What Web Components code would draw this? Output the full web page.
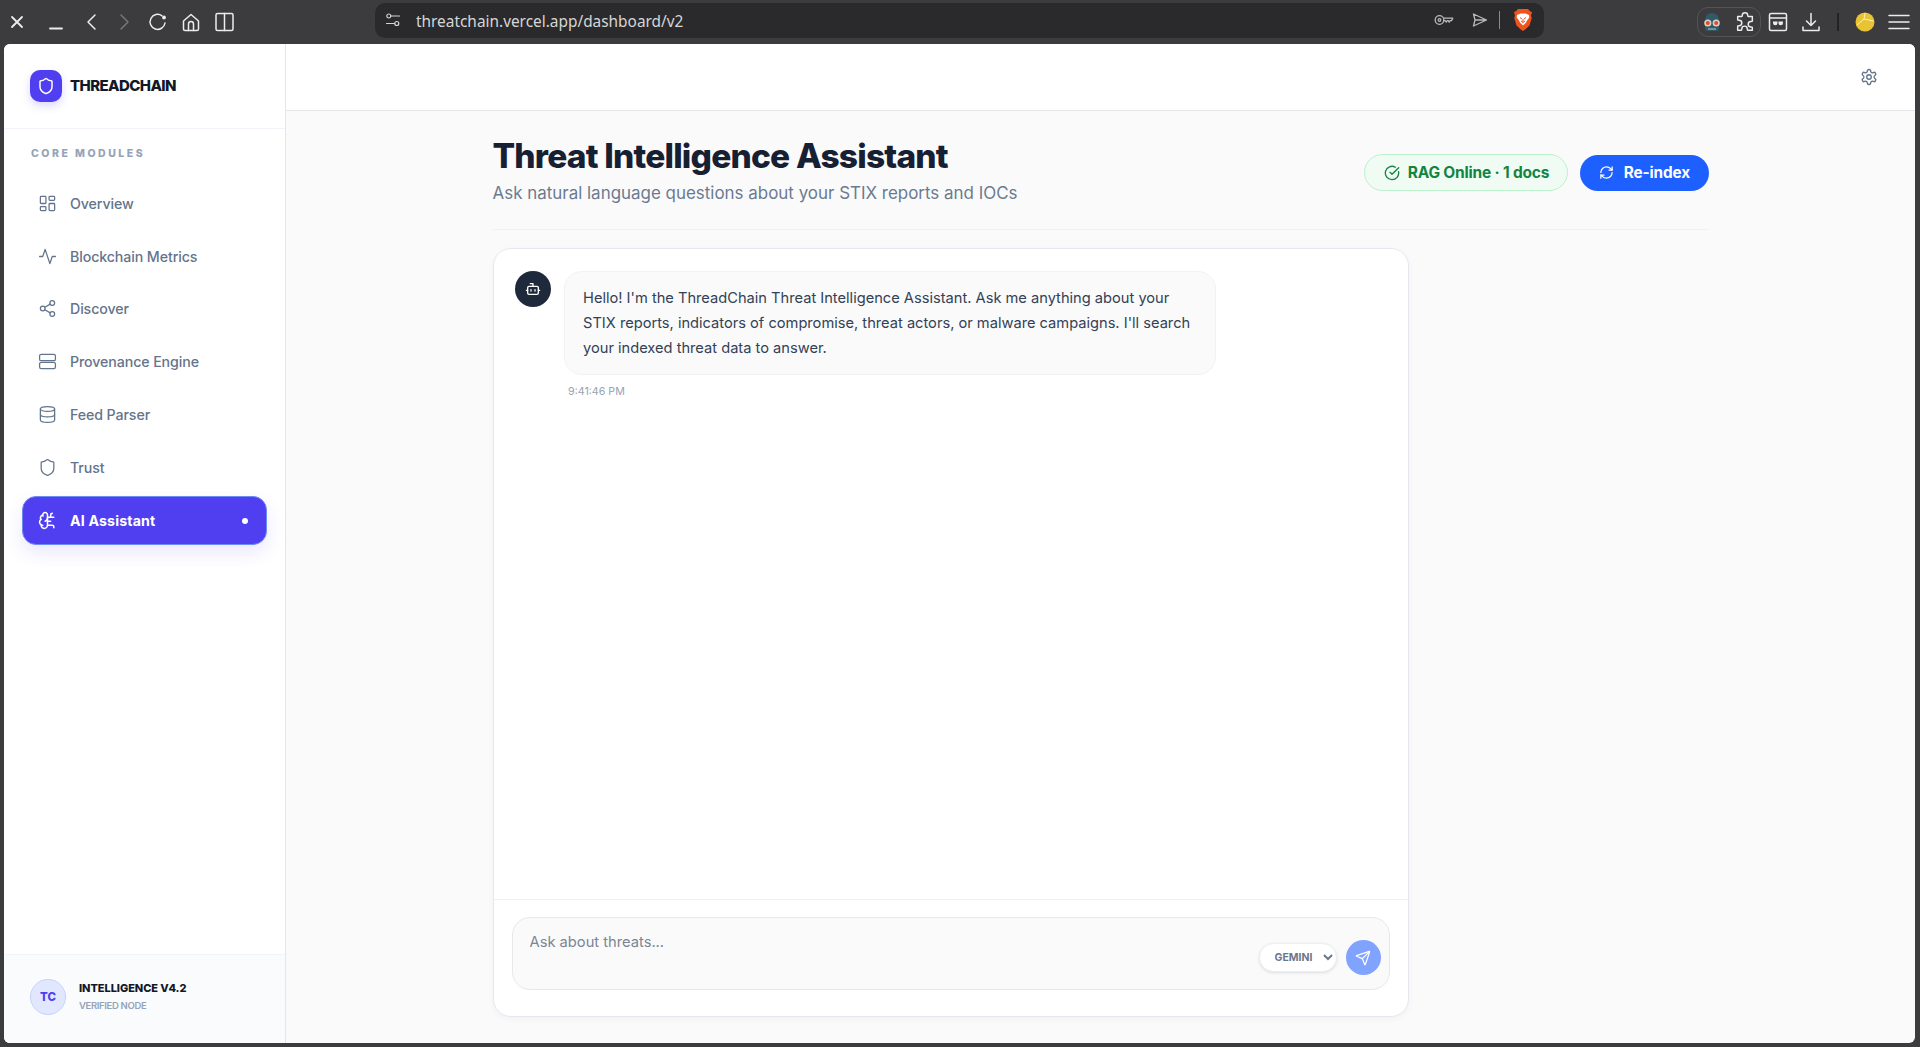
<!DOCTYPE html>
<html lang="en">
<head>
<meta charset="utf-8">
<title>ThreadChain</title>
<style>
  html, body { margin: 0; height: 100%; overflow: hidden; background: #3c3c3e; font-family: Inter, "Noto Sans", sans-serif; }
  body { display: flex; flex-direction: column; }
  browser-bar { flex: none; }
  app-shell { flex: 1; min-height: 0; }
</style>
</head>
<body>
<browser-bar url="threatchain.vercel.app/dashboard/v2"></browser-bar>
<app-shell>
  <app-sidebar slot="sidebar">
    <nav-item icon="dashboard">Overview</nav-item>
    <nav-item icon="activity">Blockchain Metrics</nav-item>
    <nav-item icon="share">Discover</nav-item>
    <nav-item icon="server">Provenance Engine</nav-item>
    <nav-item icon="database">Feed Parser</nav-item>
    <nav-item icon="shield">Trust</nav-item>
    <nav-item icon="brain" active>AI Assistant</nav-item>
  </app-sidebar>
  <page-head title="Threat Intelligence Assistant" subtitle="Ask natural language questions about your STIX reports and IOCs">
    <status-badge>RAG Online · 1 docs</status-badge>
    <action-button>Re-index</action-button>
  </page-head>
  <chat-panel>
    <chat-message time="9:41:46 PM">Hello! I'm the ThreadChain Threat Intelligence Assistant. Ask me anything about your STIX reports, indicators of compromise, threat actors, or malware campaigns. I'll search your indexed threat data to answer.</chat-message>
  </chat-panel>
</app-shell>

<script>
const ICONS = {
  dashboard: '<rect x="3" y="3" width="7" height="9" rx="1"/><rect x="14" y="3" width="7" height="5" rx="1"/><rect x="14" y="12" width="7" height="9" rx="1"/><rect x="3" y="16" width="7" height="5" rx="1"/>',
  activity: '<path d="M22 12h-4l-3 9L9 3l-3 9H2"/>',
  share: '<circle cx="18" cy="5" r="3"/><circle cx="6" cy="12" r="3"/><circle cx="18" cy="19" r="3"/><path d="M8.59 13.51l6.83 3.98M15.41 6.51l-6.82 3.98"/>',
  server: '<rect x="2" y="3" width="20" height="8" rx="2"/><rect x="2" y="13" width="20" height="8" rx="2"/>',
  database: '<ellipse cx="12" cy="5" rx="9" ry="3"/><path d="M3 5v14a9 3 0 0 0 18 0V5"/><path d="M3 12a9 3 0 0 0 18 0"/>',
  shield: '<path d="M20 13c0 5-3.5 7.5-7.66 8.95a1 1 0 0 1-.67-.01C7.5 20.5 4 18 4 13V6a1 1 0 0 1 1-1c2 0 4.5-1.2 6.24-2.72a1.17 1.17 0 0 1 1.52 0C14.51 3.81 17 5 19 5a1 1 0 0 1 1 1z"/>',
  brain: '<path d="M12 5a3 3 0 1 0-5.997.125 4 4 0 0 0-2.526 5.77 4 4 0 0 0 .556 6.588A4 4 0 1 0 12 18Z"/><path d="M9 13a4.5 4.5 0 0 0 3-4"/><path d="M6.003 5.125A3 3 0 0 0 6.401 6.5"/><path d="M3.477 10.896a4 4 0 0 1 .585-.396"/><path d="M6 18a4 4 0 0 1-1.967-.516"/><path d="M12 13h4"/><path d="M12 18h6a2 2 0 0 1 2 2v1"/><path d="M12 8h8"/><path d="M16 8V5a2 2 0 0 1 2-2"/>',
  gear: '<path d="M12.22 2h-.44a2 2 0 0 0-2 2v.18a2 2 0 0 1-1 1.73l-.43.25a2 2 0 0 1-2 0l-.15-.08a2 2 0 0 0-2.73.73l-.22.38a2 2 0 0 0 .73 2.73l.15.1a2 2 0 0 1 1 1.72v.51a2 2 0 0 1-1 1.74l-.15.09a2 2 0 0 0-.73 2.73l.22.38a2 2 0 0 0 2.73.73l.15-.08a2 2 0 0 1 2 0l.43.25a2 2 0 0 1 1 1.73V20a2 2 0 0 0 2 2h.44a2 2 0 0 0 2-2v-.18a2 2 0 0 1 1-1.73l.43-.25a2 2 0 0 1 2 0l.15.08a2 2 0 0 0 2.73-.73l.22-.39a2 2 0 0 0-.73-2.73l-.15-.08a2 2 0 0 1-1-1.74v-.5a2 2 0 0 1 1-1.74l.15-.09a2 2 0 0 0 .73-2.73l-.22-.38a2 2 0 0 0-2.73-.73l-.15.08a2 2 0 0 1-2 0l-.43-.25a2 2 0 0 1-1-1.73V4a2 2 0 0 0-2-2z"/><circle cx="12" cy="12" r="3"/>',
  check: '<path d="M21.801 10A10 10 0 1 1 17 3.335"/><path d="m9 11 3 3L22 4"/>',
  refresh: '<path d="M3 12a9 9 0 0 1 9-9 9.75 9.75 0 0 1 6.74 2.74L21 8"/><path d="M21 3v5h-5"/><path d="M21 12a9 9 0 0 1-9 9 9.75 9.75 0 0 1-6.74-2.74L3 16"/><path d="M8 16H3v5"/>',
  bot: '<path d="M12 8V4H8"/><rect x="4" y="8" width="16" height="12" rx="2"/><path d="M2 14h2M20 14h2M15 13v2M9 13v2"/>',
  send: '<path d="M14.536 21.686a.5.5 0 0 0 .937-.024l6.5-19a.496.496 0 0 0-.635-.635l-19 6.5a.5.5 0 0 0-.024.937l7.93 3.18a2 2 0 0 1 1.112 1.11z"/><path d="m21.854 2.147-10.94 10.939"/>'
};

function icon(name, size, width = 2) {
  return `<svg width="${size}" height="${size}" viewBox="0 0 24 24" fill="none" stroke="currentColor" stroke-width="${width}" stroke-linecap="round" stroke-linejoin="round" style="display:block;flex:none">${ICONS[name]}</svg>`;
}

class BrowserBar extends HTMLElement {
  constructor() {
    super();
    this.attachShadow({ mode: 'open' });
  }
  connectedCallback() {
    const tool = (gap, inner) => `<svg class="t" style="margin-left:${gap}px" width="24" height="24" viewBox="0 0 24 24" fill="none" stroke="currentColor" stroke-width="1.5" stroke-linecap="round" stroke-linejoin="round">${inner}</svg>`;
    this.shadowRoot.innerHTML = `
      <style>
        :host { display: block; height: 44px; background: #3c3c3e; color: #ececec; }
        .bar { height: 44px; display: grid; grid-template-columns: 375px 1169px 1fr; align-items: center; }
        .left, .right { display: flex; align-items: center; height: 100%; }
        .left { padding-left: 5px; }
        .t { display: block; flex: none; }
        .url { height: 35px; margin-top: -4px; background: #2a2a2c; border-radius: 10px; display: flex; align-items: center; padding: 0 11px 0 10px; color: #d4d4d4; }
        .url span { font: 400 15.400px "Noto Sans", sans-serif; margin: 2px 0 0 15px; flex: 1; color: #d6d6d6; }
        .sep { width: 1px; height: 18px; background: #8a8a8a; margin: 0 13px 0 10px; }
        .right { padding-left: 153px; }
        .pill { display: flex; align-items: center; width: 64px; height: 30px; box-sizing: border-box; border: 1px solid #545456; border-radius: 11px; padding-left: 3px; gap: 11px; }
        .vsep { width: 2px; height: 18px; background: #232325; margin: 0 16px 0 14px; }
      </style>
      <div class="bar">
        <div class="left">
          ${tool(0, '<path d="M7 7l10 10M17 7L7 17" stroke-width="1.8"/>')}
          ${tool(15, '<path d="M6 18.500h12" stroke-width="1.8"/>')}
          ${tool(12, '<path d="M15 5l-7 7 7 7"/>')}
          ${tool(8, '<path d="M9 5l7 7-7 7" stroke="#77777a"/>')}
          ${tool(10, '<path d="M19 13a7.500 7.500 0 1 1-3-7.200"/><circle cx="18" cy="7.500" r="1.900" fill="currentColor" stroke="none"/>')}
          ${tool(9, '<path d="M4.500 11L12 4.500 19.500 11v8a1.500 1.500 0 0 1-1.500 1.500H6A1.500 1.500 0 0 1 4.500 19z"/><path d="M9.500 20.500V14a2.500 2.500 0 0 1 5 0v6.500"/>')}
          ${tool(9, '<rect x="4" y="3.500" width="17" height="17" rx="1.500"/><path d="M12.500 3.500v17"/>')}
        </div>
        <div class="url">
          <svg width="16" height="16" viewBox="0 0 16 16" fill="none" stroke="currentColor" stroke-width="1.2" stroke-linecap="round"><circle cx="3.800" cy="4" r="2"/><path d="M6 4h8.500"/><circle cx="11.800" cy="11.500" r="2"/><path d="M1.500 11.500h8"/></svg>
          <span>${this.getAttribute('url')}</span>
          <svg width="20" height="14" viewBox="0 0 20 14" fill="none" stroke="#b9b9b9" stroke-width="1.3" stroke-linejoin="round"><circle cx="5.500" cy="7" r="4.300"/><circle cx="5.500" cy="7" r="1.300"/><path d="M9.800 5.200h9l-1.300 2.400h-1.400l-.9 1.600-1-1.600h-1l-.9 1.500-1.200-1.500H9.800"/></svg>
          <svg width="18" height="16" viewBox="0 0 18 16" fill="none" stroke="#b9b9b9" stroke-width="1.3" stroke-linejoin="round" style="margin-left:17px"><path d="M2.500 2l13 6-13 6 1.500-6zM4 8h11.500"/></svg>
          <i class="sep"></i>
          <svg width="20" height="24" viewBox="0 0 20 24"><path d="M5 1h10l2 2.300 2 .7-1 3.500.7 2.500-2.200 7.500-4 3.800L10 23l-2.500-1.700-4-3.800L1.300 10 2 7.500 1 4l2-.7z" fill="#f1531f"/><path d="M4 7l3.500-1.500h5L16 7l.3 2.500L14 12.500l-1 2-1.500 1.500L10 17.500 8.500 16 7 14.500l-1-2-2.300-3z" fill="#fff"/><path d="M7 9.500l2 1.500M13 9.500L11 11M10 11v3.500M8 13l2 1.500 2-1.500" stroke="#f1531f" stroke-width="1" fill="none"/></svg>
        </div>
        <div class="right">
          <div class="pill">
            <svg width="22" height="24" viewBox="0 0 22 24"><path d="M4 10a7 7 0 0 1 14 0v9a2 2 0 0 1-2 2H6a2 2 0 0 1-2-2z" fill="#2f5a66"/><circle cx="6.800" cy="13" r="3.600" fill="#d8d0c6"/><circle cx="15.200" cy="13" r="3.600" fill="#d8d0c6"/><circle cx="6.800" cy="13" r="2" fill="#e4482e"/><circle cx="15.200" cy="13" r="2" fill="#e4482e"/><rect x="7" y="18" width="8" height="2" fill="#7d8c92"/></svg>
            <svg width="22" height="22" viewBox="0 0 24 24" fill="none" stroke="currentColor" stroke-width="1.600" stroke-linejoin="round"><path d="M9 5a3 3 0 0 1 6 0c0 .500 0 1 .500 1H20v5c0 .500-1 .500-1.500.500a3 3 0 0 0 0 6c.500 0 1.500 0 1.500.500V21h-5c-.500 0-.500-1-.500-1.500a3 3 0 0 0-6 0C8.500 20 8.500 21 8 21H4v-4.500c0-.500 1-.500 1.500-.500a3 3 0 0 0 0-6C5 10 4 10 4 9.500V6h4.500C9 6 9 5.500 9 5z"/></svg>
          </div>
          <svg class="t" width="24" height="24" viewBox="0 0 24 24" fill="none" stroke="currentColor" stroke-width="1.500" style="margin-left:5px"><rect x="3.500" y="3.500" width="17" height="17" rx="1.500"/><path d="M3.500 8h17"/><path d="M7 11.500h4.500v1.500a2 2 0 0 1-4.500 0zM12.500 11.500H17v1.500a2 2 0 0 1-4.500 0z" fill="currentColor" stroke="none"/></svg>
          ${tool(9, '<path d="M12 3.500v12M7.500 11l4.500 4.500 4.500-4.500"/><path d="M4 17v3.500h16V17"/>')}
          <i class="vsep"></i>
          <svg width="20" height="20" viewBox="0 0 20 20" style="flex:none"><circle cx="10" cy="10" r="9.500" fill="#e8c334"/><path d="M2 13l7-6 9.500 2M9 7l1-6" stroke="#fff3b0" stroke-width="1" fill="none"/></svg>
          ${tool(12, '<path d="M2 5.500h20M2 12h20M2 18.500h20"/>')}
        </div>
      </div>`;
  }
}
customElements.define('browser-bar', BrowserBar);

const shellTemplate = document.createElement('template');
shellTemplate.innerHTML = `
  <style>
    :host { display: flex; margin: 0 5px 4px 4px; border-radius: 6px; overflow: hidden; background: #fafafb; }
    .side { flex: none; width: 282px; }
    .main { flex: 1; min-width: 0; display: flex; flex-direction: column; }
    .top { flex: none; height: 67px; box-sizing: border-box; background: #fff; border-bottom: 1px solid #e4e6ea; display: flex; align-items: center; justify-content: flex-end; padding: 0 37px 1px 0; color: #64748b; }
    .content { flex: 1; min-height: 0; width: 1216px; margin: 0 auto; padding: 25px 0 26px; display: flex; flex-direction: column; }
  </style>
  <div class="side"><slot name="sidebar"></slot></div>
  <div class="main">
    <div class="top">${icon('gear', 18, 1.8)}</div>
    <div class="content"><slot></slot></div>
  </div>`;
class AppShell extends HTMLElement {
  constructor() {
    super();
    this.attachShadow({ mode: 'open' }).appendChild(shellTemplate.content.cloneNode(true));
  }
}
customElements.define('app-shell', AppShell);

const sidebarTemplate = document.createElement('template');
sidebarTemplate.innerHTML = `
  <style>
    :host { display: flex; flex-direction: column; height: 100%; box-sizing: border-box; background: #fff; border-right: 1px solid #e4e5ee; }
    .brand { flex: none; height: 85px; box-sizing: border-box; display: flex; align-items: center; gap: 8px; padding: 0 0 0 26px; border-bottom: 1px solid #f1f4f8; }
    .logo { width: 32px; height: 32px; border-radius: 10px; background: #4f3ff0; color: #fff; display: flex; align-items: center; justify-content: center; box-shadow: 0 4px 8px rgba(79,63,240,.2); }
    .name { font: 800 15px Inter, sans-serif; letter-spacing: -.6px; color: #111827; margin-top: -2px; }
    .label { font: 800 10.500px Inter, sans-serif; letter-spacing: 2.500px; color: #94a3b8; padding: 18px 0 0 27px; line-height: 13px; }
    nav { flex: 1; display: flex; flex-direction: column; gap: 4.850px; padding: 19.300px 18px 0; }
    .foot { flex: none; height: 89px; box-sizing: border-box; background: #fafbfc; border-top: 1px solid #f1f4f8; display: flex; align-items: center; gap: 13px; padding: 0 0 5px 26px; }
    .av { width: 36px; height: 36px; box-sizing: border-box; border-radius: 50%; background: #e0e7ff; border: 1px solid #c7d2fe; color: #4f3ff0; font: 800 11.500px Inter, sans-serif; display: flex; align-items: center; justify-content: center; }
    .t1 { font: 800 11px Inter, sans-serif; color: #111827; letter-spacing: -.05px; line-height: 14px; }
    .t2 { font: 600 9.500px Inter, sans-serif; color: #94a3b8; letter-spacing: -.35px; line-height: 12px; margin-top: 5px; }
  </style>
  <div class="brand">
    <div class="logo">${icon('shield', 18, 2)}</div>
    <div class="name">THREADCHAIN</div>
  </div>
  <div class="label">CORE MODULES</div>
  <nav><slot></slot></nav>
  <div class="foot">
    <div class="av">TC</div>
    <div>
      <div class="t1">INTELLIGENCE V4.2</div>
      <div class="t2">VERIFIED NODE</div>
    </div>
  </div>`;
class AppSidebar extends HTMLElement {
  constructor() {
    super();
    this.attachShadow({ mode: 'open' }).appendChild(sidebarTemplate.content.cloneNode(true));
  }
}
customElements.define('app-sidebar', AppSidebar);

class NavItem extends HTMLElement {
  constructor() {
    super();
    this.attachShadow({ mode: 'open' });
  }
  connectedCallback() {
    const active = this.hasAttribute('active');
    this.shadowRoot.innerHTML = `
      <style>
        :host { display: flex; align-items: center; height: 48px; box-sizing: border-box; padding: 0 0 0 16px; gap: 13px; border-radius: 14px; font: 500 14.200px Inter, sans-serif; color: #64748b; letter-spacing: -.1px; }
        :host([active]) { height: 49px; background: #4f3ff0; color: #fff; font-weight: 700; letter-spacing: .15px; border: 1px solid #6d8bf5; padding-left: 15px; box-shadow: 0 8px 18px rgba(79,63,240,.12); }
        .dot { width: 6px; height: 6px; border-radius: 50%; background: #fff; margin: 0 18px 0 auto; }
      </style>
      ${icon(this.getAttribute('icon'), 19, active ? 1.9 : 1.6)}
      <slot></slot>
      ${active ? '<span class="dot"></span>' : ''}`;
  }
}
customElements.define('nav-item', NavItem);

class PageHead extends HTMLElement {
  constructor() {
    super();
    this.attachShadow({ mode: 'open' });
  }
  connectedCallback() {
    this.shadowRoot.innerHTML = `
      <style>
        :host { display: flex; flex: none; align-items: flex-start; justify-content: space-between; height: 94px; box-sizing: border-box; border-bottom: 1px solid #f0f1f4; }
        h1 { margin: 0; font: 800 33.500px/40px Inter, sans-serif; letter-spacing: -.8px; color: #172033; }
        p { margin: 4px 0 0; font: 400 16.950px/26px Inter, sans-serif; color: #6b7a90; }
        .actions { display: flex; align-items: center; gap: 12px; margin-top: 18px; }
      </style>
      <div>
        <h1>${this.getAttribute('title')}</h1>
        <p>${this.getAttribute('subtitle')}</p>
      </div>
      <div class="actions"><slot></slot></div>`;
  }
}
customElements.define('page-head', PageHead);

const badgeTemplate = document.createElement('template');
badgeTemplate.innerHTML = `
  <style>
    :host { display: flex; align-items: center; height: 37px; box-sizing: border-box; padding: 0 18px 0 19px; gap: 8px; border-radius: 19px; background: #f0fbf4; border: 1px solid #b9f1cc; color: #13843f; font: 700 15.500px Inter, sans-serif; letter-spacing: -.2px; }
  </style>
  ${icon('check', 16, 2)}<slot></slot>`;
class StatusBadge extends HTMLElement {
  constructor() {
    super();
    this.attachShadow({ mode: 'open' }).appendChild(badgeTemplate.content.cloneNode(true));
  }
}
customElements.define('status-badge', StatusBadge);

const buttonTemplate = document.createElement('template');
buttonTemplate.innerHTML = `
  <style>
    :host { display: flex; align-items: center; height: 36px; box-sizing: border-box; padding: 0 18.500px 0 18.500px; gap: 10px; border-radius: 18px; background: #1d5fff; color: #fff; font: 700 15.300px Inter, sans-serif; letter-spacing: -.1px; }
  </style>
  ${icon('refresh', 15, 2)}<slot></slot>`;
class ActionButton extends HTMLElement {
  constructor() {
    super();
    this.attachShadow({ mode: 'open' }).appendChild(buttonTemplate.content.cloneNode(true));
  }
}
customElements.define('action-button', ActionButton);

const panelTemplate = document.createElement('template');
panelTemplate.innerHTML = `
  <style>
    :host { display: flex; flex-direction: column; flex: 1; min-height: 0; width: 916px; margin-top: 18px; box-sizing: border-box; background: #fff; border: 1px solid #e7e8ef; border-radius: 18px; box-shadow: 0 2px 6px rgba(15,23,42,.04); }
    .log { flex: 1; min-height: 0; padding: 22px 22px 0 21.500px; }
    .inputrow { flex: none; height: 117px; box-sizing: border-box; border-top: 1px solid #eef0f3; padding: 17px 18px 26px; }
    .box { height: 100%; box-sizing: border-box; background: #fafafb; border: 1px solid #e6e8ec; border-radius: 18px; display: flex; align-items: flex-end; padding: 0 8px 14px 17px; }
    textarea { flex: 1; align-self: stretch; margin: 14px 0 -14px; border: 0; outline: 0; resize: none; background: transparent; padding: 0; font: 400 14.700px/20px Inter, sans-serif; color: #111827; }
    textarea::placeholder { color: #7b8594; opacity: 1; }
    select { width: 78px; height: 29px; box-sizing: border-box; background: #fff; border: 1px solid #eceef2; border-radius: 15px; padding: 0 0 0 11px; margin-bottom: 3px; font: 700 10.500px Inter, sans-serif; color: #6b7688; box-shadow: 0 1px 3px rgba(15,23,42,.12); outline: 0; }
    .send { flex: none; width: 35px; height: 35px; margin-left: 9px; border-radius: 50%; background: #7fa3ff; color: #fff; display: flex; align-items: center; justify-content: center; }
  </style>
  <div class="log"><slot></slot></div>
  <div class="inputrow">
    <div class="box">
      <textarea placeholder="Ask about threats..."></textarea>
      <select><option>GEMINI</option></select>
      <div class="send">${icon('send', 16, 1.8)}</div>
    </div>
  </div>`;
class ChatPanel extends HTMLElement {
  constructor() {
    super();
    this.attachShadow({ mode: 'open' }).appendChild(panelTemplate.content.cloneNode(true));
  }
}
customElements.define('chat-panel', ChatPanel);

class ChatMessage extends HTMLElement {
  constructor() {
    super();
    this.attachShadow({ mode: 'open' });
  }
  connectedCallback() {
    this.shadowRoot.innerHTML = `
      <style>
        :host { display: flex; gap: 13px; align-items: flex-start; }
        .who { flex: none; width: 36px; height: 36px; border-radius: 50%; background: #1e293b; color: #fff; display: flex; align-items: center; justify-content: center; }
        .bubble { box-sizing: border-box; width: 652px; padding: 14px 18px 12px; background: #fafafb; border: 1px solid #f1f2f5; border-radius: 18px; font: 400 14.650px/25.200px Inter, sans-serif; color: #334155; }
        .time { font: 400 10.700px/14px Inter, sans-serif; color: #98a2b3; margin: 10px 0 0 4px; }
      </style>
      <div class="who">${icon('bot', 16, 2)}</div>
      <div>
        <div class="bubble"><slot></slot></div>
        <div class="time">${this.getAttribute('time')}</div>
      </div>`;
  }
}
customElements.define('chat-message', ChatMessage);
</script>
</body>
</html>
